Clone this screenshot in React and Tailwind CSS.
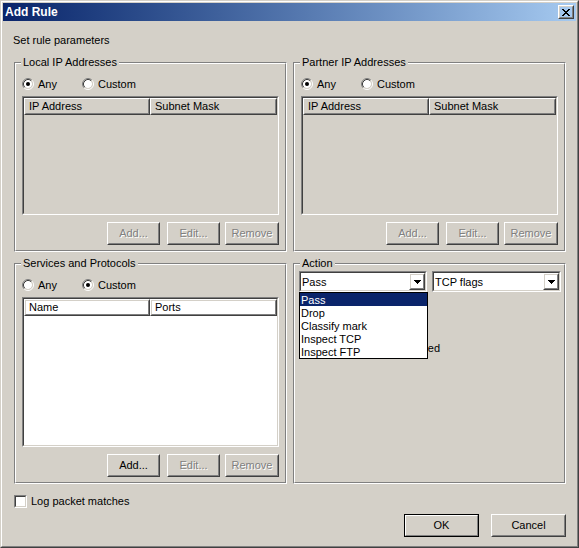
import React from 'react';

// Win2000 style "Add Rule" dialog

const disabledText = 'text-[#808080] [text-shadow:1px_1px_0_#ffffff]';

function Raised({ className = '', innerClassName = 'justify-center', children }) {
  return (
    <div className={`border border-t-white border-l-white border-r-[#404040] border-b-[#404040] ${className}`}>
      <div className={`flex h-full w-full items-center border border-t-[#d4d0c8] border-l-[#d4d0c8] border-r-[#808080] border-b-[#808080] ${innerClassName}`}>
        {children}
      </div>
    </div>
  );
}

function Sunken({ className = '', innerClassName = '', children }) {
  return (
    <div className={`border border-t-[#808080] border-l-[#808080] border-r-white border-b-white ${className}`}>
      <div className={`h-full w-full border border-t-[#404040] border-l-[#404040] border-r-[#d4d0c8] border-b-[#d4d0c8] ${innerClassName}`}>
        {children}
      </div>
    </div>
  );
}

function Button({ children, disabled, isDefault, className = '' }) {
  const label = <span className={disabled ? disabledText : 'text-black'}>{children}</span>;
  if (isDefault) {
    return (
      <div className={`border border-black ${className}`}>
        <div className="flex h-full w-full items-center justify-center border border-t-white border-l-white border-r-[#808080] border-b-[#808080]">
          {label}
        </div>
      </div>
    );
  }
  return <Raised className={className}>{label}</Raised>;
}

function Radio({ checked }) {
  return (
    <svg width="12" height="12" viewBox="0 0 12 12" className="shrink-0">
      <circle cx="6" cy="6" r="4" fill="#ffffff" />
      <path d="M2.11 9.89 A5.5 5.5 0 0 1 9.89 2.11" stroke="#808080" fill="none" />
      <path d="M9.89 2.11 A5.5 5.5 0 0 1 2.11 9.89" stroke="#ffffff" fill="none" />
      <path d="M2.82 9.18 A4.5 4.5 0 0 1 9.18 2.82" stroke="#404040" fill="none" />
      <path d="M9.18 2.82 A4.5 4.5 0 0 1 2.82 9.18" stroke="#d4d0c8" fill="none" />
      {checked && <circle cx="6" cy="6" r="2" fill="#000000" />}
    </svg>
  );
}

function RadioRow({ anyChecked }) {
  return (
    <div className="mt-[14px] flex h-[12px] items-center">
      <div className="flex w-[60px] items-center">
        <Radio checked={anyChecked} />
        <span className="ml-[4px]">Any</span>
      </div>
      <div className="flex items-center">
        <Radio checked={!anyChecked} />
        <span className="ml-[4px]">Custom</span>
      </div>
    </div>
  );
}

function Checkbox() {
  return <Sunken className="h-[13px] w-[13px] shrink-0" innerClassName="bg-white" />;
}

function HeaderCell({ className, children }) {
  return (
    <Raised className={`h-full ${className}`} innerClassName="justify-start pl-[3px]">
      <span>{children}</span>
    </Raised>
  );
}

function ListView({ columns, className, bg }) {
  return (
    <Sunken className={`mt-[6px] w-[257px] ${className}`} innerClassName={`overflow-hidden ${bg}`}>
      <div className="flex h-[17px]">
        <HeaderCell className="w-[126px]">{columns[0]}</HeaderCell>
        <HeaderCell className="w-[127px]">{columns[1]}</HeaderCell>
      </div>
    </Sunken>
  );
}

function ButtonRow({ addEnabled }) {
  return (
    <div className="mt-[7px] flex justify-end">
      <Button disabled={!addEnabled} className="h-[23px] w-[53px]">Add...</Button>
      <Button disabled className="ml-[7px] h-[23px] w-[53px]">Edit...</Button>
      <Button disabled className="ml-[5px] h-[23px] w-[54px]">Remove</Button>
    </div>
  );
}

function Group({ label, className = '', innerClassName = 'px-[6px]', children }) {
  return (
    <div className={`relative w-[273px] border border-t-[#808080] border-l-[#808080] border-r-white border-b-white ${className}`}>
      <div className={`h-full w-full border border-t-white border-l-white border-r-[#808080] border-b-[#808080] ${innerClassName}`}>
        {children}
      </div>
      <span className="absolute left-[6px] top-[-7px] bg-[#d4d0c8] px-[2px] leading-[13px]">{label}</span>
    </div>
  );
}

function DropArrow() {
  return (
    <Raised className="h-[17px] w-[16px] shrink-0">
      <svg width="7" height="4" viewBox="0 0 7 4" shapeRendering="crispEdges">
        <path d="M0 0h7v1H0z M1 1h5v1H1z M2 2h3v1H2z M3 3h1v1H3z" fill="#000000" />
      </svg>
    </Raised>
  );
}

function Combo({ value, className = '', children }) {
  return (
    <div className={`relative h-[21px] ${className}`}>
      <Sunken className="h-full w-full" innerClassName="flex items-center bg-white">
        <span className="flex-1 pl-[1px] pt-[1px] leading-[13px]">{value}</span>
        <DropArrow />
      </Sunken>
      {children}
    </div>
  );
}

const actions = ['Pass', 'Drop', 'Classify mark', 'Inspect TCP', 'Inspect FTP'];

export default function App() {
  return (
    <div className="h-[548px] w-[579px] border border-t-[#d4d0c8] border-l-[#d4d0c8] border-r-[#404040] border-b-[#404040] font-['Liberation_Sans',Arial,sans-serif] text-[11px] leading-[13px] text-black">
      <div className="h-full w-full border border-t-white border-l-white border-r-[#808080] border-b-[#808080] bg-[#d4d0c8] p-[1px]">
        {/* title bar */}
        <div className="flex h-[18px] items-center bg-gradient-to-r from-[#0a246a] to-[#a6caf0]">
          <span className="flex-1 pl-[2px] pt-[1px] text-[12px] font-bold text-white">Add Rule</span>
          <Raised className="mr-[2px] h-[14px] w-[16px]">
            <svg width="8" height="7" viewBox="0 0 8 7" shapeRendering="crispEdges">
              <path
                d="M0 0h2v1H0z M6 0h2v1H6z M1 1h2v1H1z M5 1h2v1H5z M2 2h4v1H2z M3 3h2v1H3z M2 4h4v1H2z M1 5h2v1H1z M5 5h2v1H5z M0 6h2v1H0z M6 6h2v1H6z"
                fill="#000000"
              />
            </svg>
          </Raised>
        </div>

        {/* body */}
        <div className="pl-[10px] pr-[10px] pt-[13px]">
          <div>Set rule parameters</div>

          <div className="ml-[1px] mt-[15px] flex gap-[6px]">
            <Group label="Local IP Addresses" className="h-[190px]">
              <RadioRow anyChecked />
              <ListView columns={['IP Address', 'Subnet Mask']} className="h-[119px]" bg="bg-[#d4d0c8]" />
              <ButtonRow />
            </Group>
            <Group label="Partner IP Addresses" className="h-[190px]">
              <RadioRow anyChecked />
              <ListView columns={['IP Address', 'Subnet Mask']} className="h-[119px]" bg="bg-[#d4d0c8]" />
              <ButtonRow />
            </Group>
          </div>

          <div className="ml-[1px] mt-[11px] flex gap-[6px]">
            <Group label="Services and Protocols" className="h-[221px]">
              <RadioRow anyChecked={false} />
              <ListView columns={['Name', 'Ports']} className="h-[150px]" bg="bg-white" />
              <ButtonRow addEnabled />
            </Group>
            <Group label="Action" className="h-[221px]" innerClassName="pl-[4px] pr-[3px]">
              <div className="mt-[6px] flex">
                <Combo value="Pass" className="z-10 w-[128px]">
                  <div className="absolute left-0 top-[21px] w-[129px] border border-black bg-white">
                    {actions.map((a, i) => (
                      <div
                        key={a}
                        className={`h-[13px] pl-[1px] leading-[14px] ${i === 0 ? 'bg-[#0a246a] text-white' : ''}`}
                      >
                        {a}
                      </div>
                    ))}
                  </div>
                </Combo>
                <Combo value="TCP flags" className="ml-[5px] w-[129px]" />
              </div>
              <div className="mt-[50px] flex items-center">
                <Checkbox />
                <span className="ml-[4px] w-[124px] whitespace-nowrap text-right">Stop when matched</span>
              </div>
            </Group>
          </div>

          <div className="ml-[1px] mt-[11px] flex h-[13px] items-center">
            <Checkbox />
            <span className="ml-[4px]">Log packet matches</span>
          </div>

          <div className="mt-[6px] flex justify-end">
            <Button isDefault className="h-[23px] w-[75px]">OK</Button>
            <Button className="ml-[12px] h-[23px] w-[75px]">Cancel</Button>
          </div>
        </div>
      </div>
    </div>
  );
}
